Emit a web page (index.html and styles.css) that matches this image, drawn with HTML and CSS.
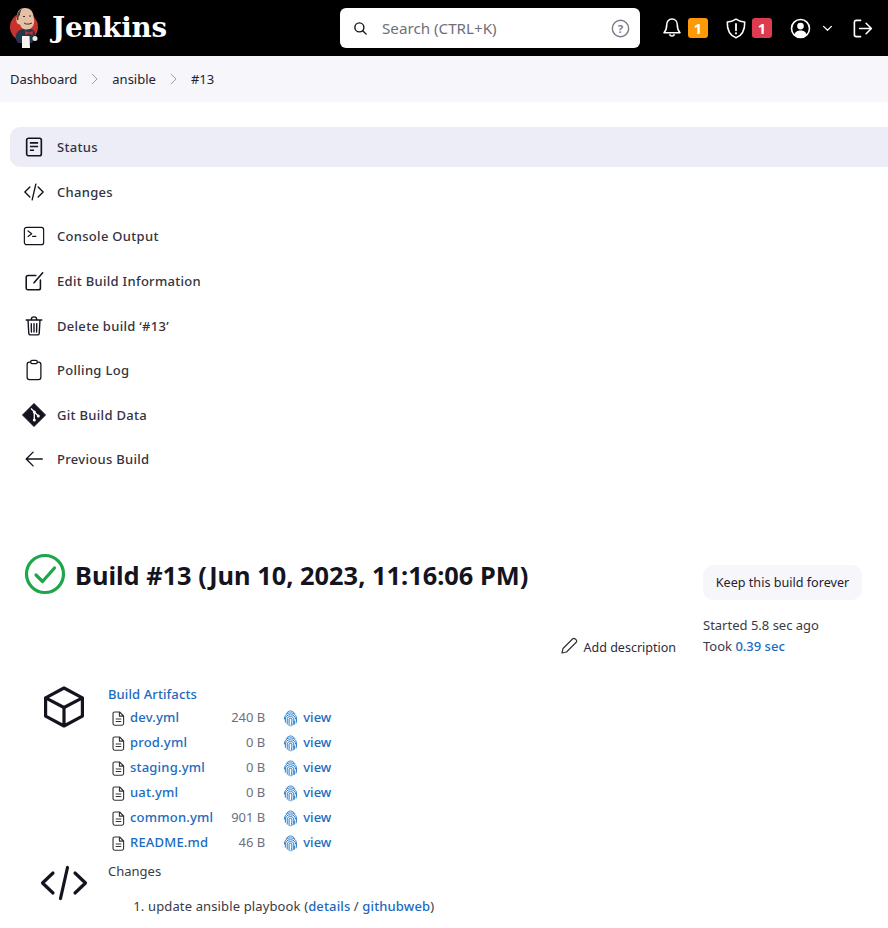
FILE: index.html
```html
<!DOCTYPE html>
<html lang="en">
<head>
<meta charset="utf-8">
<title>Jenkins</title>
<link rel="stylesheet" href="styles.css">
</head>
<body>
<header class="topbar">
  <div class="brand">
    <svg class="logo" viewBox="0 0 31 40" width="31" height="40">
      <circle cx="14" cy="19" r="14" fill="#c4332c"/>
      <path d="M6 32c-1-5 1-10 7-11l8 0c4 1 5 5 4 9l-3 5H8z" fill="#27344e"/>
      <path d="M7 9C7 3 10 0 15 0c5 0 8 3 8.500 8 .4 3 1 5 .5 7-.5 3-3 6.500-7 6.500-4 0-6-2-7-5-2 0-3.500-1.500-3.500-3.500S6 10 7 9z" fill="#e6c0a4"/>
      <path d="M7 9c.2-4 2-7 5-8-1.500 2-2 4-2 6-1 1-2 2-1.500 5L7 12z" fill="#4d3d38"/>
      <path d="M13 8.500h2M19 8h2M14 15c2 1.500 5 1.500 8 0" fill="none" stroke="#3a2c28" stroke-width="1"/>
      <path d="M15 23l4 1.500 4-1.500-.5 4-3.500-1.500-3.500 1.500z" fill="#c4332c"/>
      <path d="M12 28h7.500l.5 12h-8z" fill="#f5f5f2"/>
      <circle cx="25" cy="30.500" r="2.500" fill="#efe6dc"/>
    </svg>
    <span class="wordmark">Jenkins</span>
  </div>
  <div class="search">
    <svg class="search-icon" viewBox="0 0 16 16" width="15" height="15"><circle cx="6.800" cy="6.800" r="4.800" fill="none" stroke="#14141f" stroke-width="1.500"/><path d="M10.400 10.400L14 14" stroke="#14141f" stroke-width="1.500" stroke-linecap="round"/></svg>
    <span class="search-text">Search (CTRL+K)</span>
    <svg class="help-icon" viewBox="0 0 20 20" width="19" height="19"><circle cx="10" cy="10" r="8.600" fill="none" stroke="#7b7b88" stroke-width="1.500"/><text x="10" y="14.400" text-anchor="middle" class="help-mark">?</text></svg>
  </div>
  <div class="actions">
    <svg class="bell" viewBox="0 0 22 24" width="20" height="22"><path d="M11 2.200c-3.600 0-5.800 2.800-5.800 6.300 0 4.400-1 6.600-3 8.700h17.600c-2-2.100-3-4.300-3-8.700 0-3.500-2.200-6.300-5.800-6.300z" fill="none" stroke="#fff" stroke-width="1.700" stroke-linejoin="round"/><path d="M8.300 18.800a2.800 2.800 0 0 0 5.400 0" fill="none" stroke="#fff" stroke-width="1.700"/></svg>
    <span class="badge badge-warn">1</span>
    <svg class="shield" viewBox="0 0 24 24" width="22" height="23"><path d="M12 1.800c3 2 6 3 9.500 3.200.3 8.500-2.500 14.500-9.500 17.200C5 19.500 2.200 13.500 2.500 5 6 4.800 9 3.800 12 1.800z" fill="none" stroke="#fff" stroke-width="1.700" stroke-linejoin="round"/><path d="M12 7v7" stroke="#fff" stroke-width="2" stroke-linecap="round"/><circle cx="12" cy="17.300" r="1.200" fill="#fff"/></svg>
    <span class="badge badge-danger">1</span>
    <svg class="user" viewBox="0 0 22 22" width="21" height="21"><circle cx="11" cy="11" r="9.400" fill="none" stroke="#fff" stroke-width="1.700"/><circle cx="11" cy="8.500" r="3.500" fill="#fff"/><path d="M4.500 17.500c1-3.500 3.500-4.500 6.500-4.500s5.500 1 6.500 4.500a9 9 0 0 1-13 0z" fill="#fff"/></svg>
    <svg class="caret" viewBox="0 0 12 8" width="11" height="7"><path d="M1.500 1.500L6 6l4.500-4.500" fill="none" stroke="#fff" stroke-width="1.400" stroke-linecap="round" stroke-linejoin="round"/></svg>
    <svg class="logout" viewBox="0 0 22 22" width="21" height="21"><path d="M9 2.500H4.500a2 2 0 0 0-2 2v13a2 2 0 0 0 2 2H9" fill="none" stroke="#fff" stroke-width="1.700" stroke-linecap="round"/><path d="M8 11h12M14.800 5.500L20.300 11l-5.500 5.500" fill="none" stroke="#fff" stroke-width="1.700" stroke-linecap="round" stroke-linejoin="round"/></svg>
  </div>
</header>

<nav class="crumbs">
  <a class="crumb">Dashboard</a>
  <svg class="chev" viewBox="0 0 8 14" width="7" height="12"><path d="M1 1l6 6-6 6" fill="none" stroke="#9a9aa6" stroke-width="1.100"/></svg>
  <a class="crumb">ansible</a>
  <svg class="chev" viewBox="0 0 8 14" width="7" height="12"><path d="M1 1l6 6-6 6" fill="none" stroke="#9a9aa6" stroke-width="1.100"/></svg>
  <a class="crumb">#13</a>
</nav>

<aside class="side">
  <a class="task task-active">
    <span class="task-icon"><svg viewBox="0 0 24 24" width="22" height="22"><rect x="4" y="2.500" width="16" height="19" rx="2" fill="none" stroke="#14141f" stroke-width="1.800"/><path d="M7.500 7.500h9M7.500 11.500h9M7.500 15.500h4.500" stroke="#14141f" stroke-width="1.800"/></svg></span>
    <span>Status</span>
  </a>
  <a class="task">
    <span class="task-icon"><svg viewBox="0 0 24 24" width="22" height="22"><path d="M7.500 6.500L2 12l5.500 5.500M16.500 6.500L22 12l-5.500 5.500M14 3.500L10 20.500" fill="none" stroke="#14141f" stroke-width="1.500" stroke-linecap="round" stroke-linejoin="round"/></svg></span>
    <span>Changes</span>
  </a>
  <a class="task">
    <span class="task-icon"><svg viewBox="0 0 24 24" width="22" height="22"><rect x="1.500" y="2.500" width="21" height="19" rx="2.500" fill="none" stroke="#14141f" stroke-width="1.300"/><path d="M5.500 6.500l4 3-4 3M10.500 12.500h3.500" fill="none" stroke="#14141f" stroke-width="1.300" stroke-linecap="round" stroke-linejoin="round"/></svg></span>
    <span>Console Output</span>
  </a>
  <a class="task">
    <span class="task-icon"><svg viewBox="0 0 24 24" width="22" height="22"><path d="M14 6H5.500a2 2 0 0 0-2 2v12a1.500 1.500 0 0 0 1.500 1.500h12a2 2 0 0 0 2-2V11" fill="none" stroke="#14141f" stroke-width="1.700" stroke-linecap="round"/><path d="M12 14l9.500-11" fill="none" stroke="#14141f" stroke-width="1.700" stroke-linecap="round"/></svg></span>
    <span>Edit Build Information</span>
  </a>
  <a class="task">
    <span class="task-icon"><svg viewBox="0 0 24 24" width="22" height="22"><path d="M3.500 5.500h17M9 5c0-2 1-3 3-3s3 1 3 3M5.500 6l.8 14c.1 1 .8 1.700 1.800 1.700h7.800c1 0 1.700-.7 1.800-1.700l.8-14M9 9.500l.2 9M15 9.500l-.2 9M12 9.500v9" fill="none" stroke="#14141f" stroke-width="1.500" stroke-linecap="round"/></svg></span>
    <span>Delete build ‘#13’</span>
  </a>
  <a class="task">
    <span class="task-icon"><svg viewBox="0 0 24 24" width="22" height="22"><path d="M8.500 3.500H7a2.500 2.500 0 0 0-2.500 2.500v14A2.500 2.500 0 0 0 7 22.500h10a2.500 2.500 0 0 0 2.500-2.500V6A2.500 2.500 0 0 0 17 3.500h-1.500" fill="none" stroke="#14141f" stroke-width="1.400"/><rect x="8.500" y="1.500" width="7" height="3.500" rx="1.200" fill="none" stroke="#14141f" stroke-width="1.400"/></svg></span>
    <span>Polling Log</span>
  </a>
  <a class="task">
    <span class="task-icon"><svg viewBox="0 0 24 24" width="24" height="24"><path d="M12 .5L23.500 12 12 23.500.5 12z" fill="#14141f" stroke="#14141f" stroke-linejoin="round" stroke-width="1"/><path d="M9 5.500l3.300 3.300v7.500M12.300 9l4 4" fill="none" stroke="#fff" stroke-width="1.300"/><circle cx="12.300" cy="9" r="1.500" fill="#fff"/><circle cx="16.300" cy="13" r="1.500" fill="#fff"/><circle cx="12.300" cy="17" r="1.500" fill="#fff"/></svg></span>
    <span>Git Build Data</span>
  </a>
  <a class="task">
    <span class="task-icon"><svg viewBox="0 0 24 24" width="22" height="22"><path d="M21 12H4M11 4.500L3.500 12l7.500 7.500" fill="none" stroke="#14141f" stroke-width="1.500" stroke-linecap="round" stroke-linejoin="round"/></svg></span>
    <span>Previous Build</span>
  </a>
</aside>

<main class="main">
  <section class="build-head">
    <div class="title-wrap">
      <svg class="status-icon" viewBox="0 0 42 42" width="42" height="42"><circle cx="21" cy="21" r="18.500" fill="none" stroke="#1ea64a" stroke-width="3.200"/><path d="M12 22l6.500 6.500L30.500 15" fill="none" stroke="#1ea64a" stroke-width="3.200" stroke-linecap="round" stroke-linejoin="round"/></svg>
      <h1 class="title">Build #13 (Jun 10, 2023, 11:16:06 PM)</h1>
    </div>
    <div class="build-aside">
      <button class="keep">Keep this build forever</button>
      <p class="meta">Started 5.8 sec ago</p>
      <p class="meta">Took <a class="link">0.39 sec</a></p>
    </div>
    <a class="add-desc">
      <svg class="pencil" viewBox="0 0 18 18" width="18" height="18"><path d="M2 16l1-4.500L12.500 2c.8-.8 2-.8 2.800 0l.7.700c.8.800.8 2 0 2.800L6.500 15z" fill="none" stroke="#333" stroke-width="1.200" stroke-linejoin="round"/></svg>
      <span>Add description</span>
    </a>
  </section>

  <section class="block block-artifacts">
    <span class="block-icon"><svg viewBox="0 0 44 44" width="44" height="44"><path d="M22 3l18.400 9.800v18.400L22 41 3.600 31.200V12.800zM3.600 12.800L22 22.500l18.400-9.700M22 22.500V41" fill="none" stroke="#14141f" stroke-width="3.200" stroke-linejoin="round" stroke-linecap="round"/></svg></span>
    <div class="block-body">
      <a class="link block-title">Build Artifacts</a>
      <table class="files">
        <tr><td class="f-ico"><svg class="doc" viewBox="0 0 14 16" width="13" height="15"><use href="#doc"/></svg></td><td class="f-name"><a class="link">dev.yml</a></td><td class="f-size">240 B</td><td class="f-view"><svg class="print" viewBox="0 0 16 18" width="15" height="17"><use href="#print"/></svg><a class="link">view</a></td></tr>
        <tr><td class="f-ico"><svg class="doc" viewBox="0 0 14 16" width="13" height="15"><use href="#doc"/></svg></td><td class="f-name"><a class="link">prod.yml</a></td><td class="f-size">0 B</td><td class="f-view"><svg class="print" viewBox="0 0 16 18" width="15" height="17"><use href="#print"/></svg><a class="link">view</a></td></tr>
        <tr><td class="f-ico"><svg class="doc" viewBox="0 0 14 16" width="13" height="15"><use href="#doc"/></svg></td><td class="f-name"><a class="link">staging.yml</a></td><td class="f-size">0 B</td><td class="f-view"><svg class="print" viewBox="0 0 16 18" width="15" height="17"><use href="#print"/></svg><a class="link">view</a></td></tr>
        <tr><td class="f-ico"><svg class="doc" viewBox="0 0 14 16" width="13" height="15"><use href="#doc"/></svg></td><td class="f-name"><a class="link">uat.yml</a></td><td class="f-size">0 B</td><td class="f-view"><svg class="print" viewBox="0 0 16 18" width="15" height="17"><use href="#print"/></svg><a class="link">view</a></td></tr>
        <tr><td class="f-ico"><svg class="doc" viewBox="0 0 14 16" width="13" height="15"><use href="#doc"/></svg></td><td class="f-name"><a class="link">common.yml</a></td><td class="f-size">901 B</td><td class="f-view"><svg class="print" viewBox="0 0 16 18" width="15" height="17"><use href="#print"/></svg><a class="link">view</a></td></tr>
        <tr><td class="f-ico"><svg class="doc" viewBox="0 0 14 16" width="13" height="15"><use href="#doc"/></svg></td><td class="f-name"><a class="link">README.md</a></td><td class="f-size">46 B</td><td class="f-view"><svg class="print" viewBox="0 0 16 18" width="15" height="17"><use href="#print"/></svg><a class="link">view</a></td></tr>
      </table>
    </div>
  </section>

  <section class="block block-changes">
    <span class="block-icon"><svg viewBox="0 0 48 36" width="48" height="36"><path d="M13 8L2.500 18 13 28M35 8l10.500 10L35 28M27.500 2.500L20.500 33.500" fill="none" stroke="#14141f" stroke-width="3.200" stroke-linecap="round" stroke-linejoin="round"/></svg></span>
    <div class="block-body">
      <div class="changes-title">Changes</div>
      <ol class="change-list">
        <li>update ansible playbook (<a class="link">details</a> / <a class="link">githubweb</a>)</li>
      </ol>
    </div>
  </section>
</main>

<svg class="sprites" width="0" height="0">
  <symbol id="doc" viewBox="0 0 14 16"><path d="M2.800 1h5.400L12.500 5.300V13.500a1.700 1.700 0 0 1-1.700 1.700H2.800a1.700 1.700 0 0 1-1.700-1.700V2.700A1.700 1.700 0 0 1 2.800 1zM8 1.200V5.500h4.300M4 8.500h6M4 11.300h6" fill="none" stroke="#333" stroke-width="1.200" stroke-linejoin="round"/></symbol>
  <symbol id="print" viewBox="0 0 16 18"><g fill="none" stroke="#1b74c8" stroke-width="1" stroke-linecap="round"><path d="M3.500 3.500C5 1.700 6.500 1 8 1s3 .7 4.500 2.500"/><path d="M1.500 9.500C1.500 5.500 4.300 3 8 3s6.500 2.500 6.500 6.500c0 1.500-.1 3-.5 4.300"/><path d="M2.500 13V9.500C2.500 6.500 5 5 8 5s5.500 1.500 5.500 4.500"/><path d="M4.500 15V9.500C4.500 7.800 6 7 8 7s3.500.8 3.500 2.500c0 2.500-.2 4.500-1 6.500"/><path d="M6.500 16.500V9.500C6.500 9 7.200 8.800 8 8.800s1.500.2 1.500.7c0 3-.2 5.300-1 7.500"/><path d="M12.500 11.500c0 1.500-.1 3-.6 4"/></g></symbol>
</svg>
</body>
</html>
```

FILE: styles.css
```css
* { box-sizing: border-box; }

html, body { margin: 0; padding: 0; }

body {
  background: #fff;
  color: #14141f;
  font-family: "Noto Sans", "Open Sans", "Liberation Sans", sans-serif;
  font-size: 13px;
  width: 888px;
  height: 928px;
  overflow: hidden;
}

a { color: inherit; text-decoration: none; }
p { margin: 0; }
.sprites { display: block; height: 0; }

.topbar {
  height: 56px;
  background: #000;
  display: flex;
  align-items: center;
  padding-left: 10px;
}

.brand { display: flex; align-items: center; gap: 11px; width: 330px; }
.logo { flex: none; }

.wordmark {
  color: #fff;
  font-family: "DejaVu Serif", "Liberation Serif", serif;
  font-weight: 700;
  font-size: 27.700px;
  letter-spacing: -0.200px;
  line-height: 1;
}

.search {
  width: 300px;
  height: 40px;
  background: #fff;
  border-radius: 6px;
  display: flex;
  align-items: center;
  padding: 0 10px 0 13px;
}

.search-text { color: #6f6f7c; font-size: 15.200px; margin-left: 14px; flex: 1; }
.help-mark { font-size: 12px; font-weight: 700; fill: #7b7b88; font-family: "Noto Sans", sans-serif; }

.actions { display: flex; align-items: center; margin-left: 22px; }

.badge {
  width: 20px;
  height: 20px;
  border-radius: 3px;
  color: #fff;
  font-weight: 700;
  font-size: 14.500px;
  line-height: 20px;
  text-align: center;
}

.badge-warn { background: #fe9a05; margin-left: 6px; }
.badge-danger { background: #de3a50; margin-left: 5px; }
.shield { margin-left: 17px; }
.user { margin-left: 18px; }
.caret { margin-left: 11px; }
.logout { margin-left: 19px; }

.crumbs {
  height: 46px;
  background: #f6f6fb;
  display: flex;
  align-items: center;
  padding-left: 10px;
  gap: 14px;
}

.crumb { color: #23232e; font-size: 13px; }

.side {
  padding: 25px 0 0 10px;
  display: flex;
  flex-direction: column;
  gap: 4.630px;
}

.task {
  height: 40px;
  display: flex;
  align-items: center;
  color: #33333f;
  font-size: 13px;
  font-weight: 500;
  letter-spacing: 0.300px;
  border-radius: 10px 0 0 10px;
}

.task-active { background: #ecedf6; }
.task-icon { width: 47px; display: flex; justify-content: center; flex: none; }

.build-head {
  position: relative;
  height: 128px;
  margin-top: 75px;
  display: flex;
  justify-content: space-between;
  padding: 0 26px 0 24px;
}

.title-wrap { display: flex; align-items: flex-start; gap: 9px; }
.status-icon { flex: none; margin-top: -1px; }

.title {
  margin: -1px 0 0;
  font-size: 25.400px;
  font-weight: 700;
  line-height: 44px;
  color: #14141f;
  white-space: nowrap;
}

.build-aside { width: 159px; padding-top: 11px; color: #3a3a46; }

.keep {
  display: block;
  width: 159px;
  height: 35px;
  border: 0;
  border-radius: 10px;
  background: #f6f6fb;
  color: #23232e;
  font: 400 12.600px "Noto Sans", sans-serif;
  margin-bottom: 15px;
  padding: 0;
}

.meta { font-size: 13px; line-height: 21px; }

.add-desc {
  position: absolute;
  right: 212px;
  top: 85px;
  display: flex;
  align-items: center;
  gap: 6px;
  font-size: 12.500px;
  color: #2c2c38;
}

.pencil { margin-top: -4px; }

.link { color: #1a6bc0; font-weight: 500; }

.block { display: flex; }
.block-artifacts { padding-left: 42px; }
.block-icon { flex: none; display: block; }
.block-artifacts .block-icon { width: 66px; padding-top: 3px; }
.block-title { display: block; font-size: 13px; line-height: 18px; margin-top: 3px; letter-spacing: 0.100px; }

.files {
  border-collapse: collapse;
  margin: 1px 0 0 4px;
  font-size: 13px;
}

.files td { height: 25px; padding: 0; white-space: nowrap; }
.f-ico { width: 18px; vertical-align: middle; }
.doc, .print { vertical-align: middle; display: inline-block; margin: -3px 0; }
.f-name { width: 76px; letter-spacing: 0.200px; }
.f-size { width: 52px; color: #6f6f7c; text-align: right; }
.f-view { padding-left: 18px !important; }
.print { margin-right: 5px; }

.block-changes { padding-left: 40px; margin-top: 3px; }
.block-changes .block-icon { width: 68px; padding-top: 8px; }
.changes-title { font-size: 13px; line-height: 18px; color: #3a3a46; margin-top: 5px; }
.change-list { margin: 17px 0 0; padding-left: 40px; font-size: 13px; line-height: 18px; color: #3a3a46; letter-spacing: 0.130px; }
```
